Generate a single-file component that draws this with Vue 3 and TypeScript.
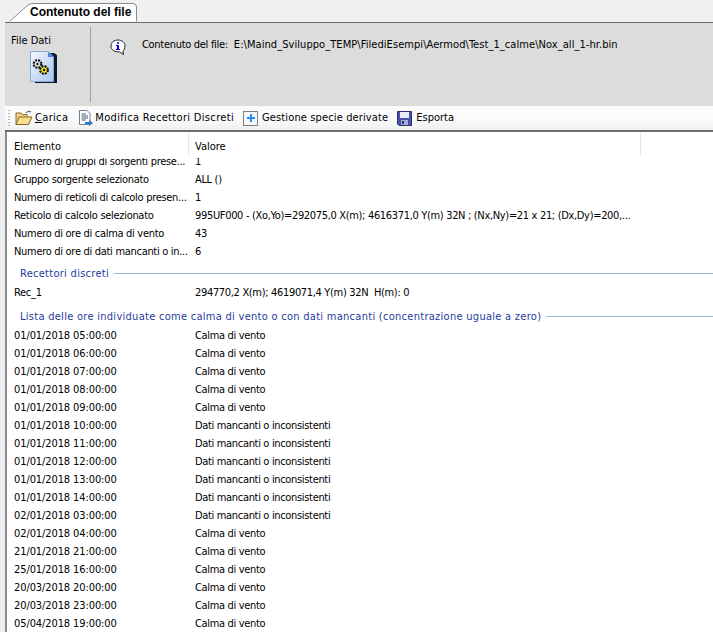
<script setup lang="ts">
interface Row { k: string; v: string }
const top: Row[] = [
  { k: 'Gruppo sorgente selezionato', v: 'ALL ()' },
  { k: 'Numero di reticoli di calcolo presen...', v: '1' },
  { k: 'Reticolo di calcolo selezionato', v: '995UF000 - (Xo,Yo)=292075,0 X(m); 4616371,0 Y(m) 32N ; (Nx,Ny)=21 x 21; (Dx,Dy)=200,...' },
  { k: 'Numero di ore di calma di vento', v: '43' },
  { k: 'Numero di ore di dati mancanti o in...', v: '6' },
]
const C = 'Calma di vento'
const D = 'Dati mancanti o inconsistenti'
const hours: Row[] = [
  ['01/01/2018 05:00:00', C], ['01/01/2018 06:00:00', C], ['01/01/2018 07:00:00', C],
  ['01/01/2018 08:00:00', C], ['01/01/2018 09:00:00', C], ['01/01/2018 10:00:00', D],
  ['01/01/2018 11:00:00', D], ['01/01/2018 12:00:00', D], ['01/01/2018 13:00:00', D],
  ['01/01/2018 14:00:00', D], ['02/01/2018 03:00:00', D], ['02/01/2018 04:00:00', C],
  ['21/01/2018 21:00:00', C], ['25/01/2018 16:00:00', C], ['20/03/2018 20:00:00', C],
  ['20/03/2018 23:00:00', C], ['05/04/2018 19:00:00', C],
].map(([k, v]) => ({ k, v }))
</script>

<template>
  <div class="app">
    <div class="tabstrip">
      <div class="tab">
        <svg class="tabshape" width="128" height="20" viewBox="0 0 128 20">
          <path d="M0.5 19.5 L19 3 Q21 1.500 24 1.500 L124 1.500 Q127.500 1.500 127.500 5 L127.500 19.500" fill="#fff" stroke="#8a8a8a" />
        </svg>
        <span class="tabtext">Contenuto del file</span>
      </div>
    </div>
    <div class="body">
      <div class="info">
        <div class="filedati">
          <span class="fdlabel">File Dati</span>
          <svg class="docicon" width="28" height="33" viewBox="0 0 28 33">
            <defs>
              <linearGradient id="page" x1="0" y1="0" x2="1" y2="1">
                <stop offset="0" stop-color="#f4f8ff" />
                <stop offset="1" stop-color="#a9c6f2" />
              </linearGradient>
            </defs>
            <path d="M5 2 H24 L27 4 V32 H5 Z" fill="#10182c" />
            <path d="M0.5 0.5 H18 L23.5 6 V30.5 H0.5 Z" fill="url(#page)" stroke="#8aa8d8" />
            <path d="M18 0.5 L23.5 6 H18 Z" fill="#4f8ae0" />
            <circle cx="7.500" cy="13" r="3.800" fill="#e8e8e8" stroke="#111" stroke-width="2.200" stroke-dasharray="2 1" />
            <circle cx="7.500" cy="13" r="1.200" fill="#111" />
            <circle cx="14" cy="19" r="3.800" fill="#f8e71c" stroke="#111" stroke-width="2.200" stroke-dasharray="2 1" />
            <circle cx="14" cy="19" r="1.200" fill="#111" />
          </svg>
        </div>
        <div class="sep"></div>
        <svg class="infoicon" width="16" height="17" viewBox="0 0 16 17">
          <path d="M8 1 C12 1 15 3.500 15 7 C15 9.500 14 11 13 11.800 L13.500 15.500 L9.500 12.800 C4.500 13.300 1 11 1 7 C1 3.500 4 1 8 1 Z" fill="#fff" stroke="#222" />
          <circle cx="8" cy="4" r="1.100" fill="#0000e0" />
          <path d="M6 6 H9 V10 H10 V11 H6 V10 H7 V7 H6 Z" fill="#0000e0" />
        </svg>
        <span class="path"><span class="plabel">Contenuto del file:</span><span class="pval">E:\Maind_Sviluppo_TEMP\FilediEsempi\Aermod\Test_1_calme\Nox_all_1-hr.bin</span></span>
      </div>
      <div class="toolbar">
        <span class="grip"></span>
        <div class="tool t1">
          <svg width="18" height="16" viewBox="0 0 18 16">
            <path d="M1 14.500 V3 H6 L7.500 4.500 H12 V7" fill="#f0d48a" stroke="#8a6a20" />
            <path d="M1 14.500 L4 7 H17 L13.500 14.500 Z" fill="#f7dc8e" stroke="#8a6a20" />
            <path d="M11 3 Q13 0.500 16 2" fill="none" stroke="#5a6a80" stroke-width="1.200" />
          </svg>
          <span class="tl"><u>C</u>arica</span>
        </div>
        <div class="tool t2">
          <svg width="15" height="16" viewBox="0 0 15 16">
            <path d="M1.500 0.500 H9 L12 3.500 V14.500 H1.500 Z" fill="#fff" stroke="#6c7f9c" />
            <path d="M3.500 4 H8 M3.500 6 H10 M3.500 8 H10 M3.500 10 H8" stroke="#4a5a78" />
            <path d="M7 12 H11 V10 L15 13 L11 16 V14 H7 Z" fill="#2f78c8" />
          </svg>
          <span class="tl">Modifica Recettori Discreti</span>
        </div>
        <div class="tool t3">
          <span class="plusbox"><svg width="8" height="8" viewBox="0 0 8 8"><path d="M3 0 H5 V3 H8 V5 H5 V8 H3 V5 H0 V3 H3 Z" fill="#1e90ff" /></svg></span>
          <span class="tl">Gestione specie derivate</span>
        </div>
        <div class="tool t4">
          <svg width="15" height="15" viewBox="0 0 15 15">
            <path d="M0.500 0.500 H14.500 V14.500 H2 L0.500 13 Z" fill="#4a52a8" stroke="#2a2f78" />
            <rect x="3" y="1" width="9" height="6" fill="#e8ecf8" />
            <rect x="4" y="9" width="7" height="5" fill="#a8aed0" />
            <rect x="5" y="10" width="2" height="3" fill="#2a2f78" />
          </svg>
          <span class="tl">Esporta</span>
        </div>
      </div>
      <div class="list">
        <div class="lhead">
          <span class="hcell h1">Elemento</span>
          <span class="hcell h2">Valore</span>
        </div>
        <div class="row clipped"><span class="k">Numero di gruppi di sorgenti prese...</span><span class="v">1</span></div>
        <div v-for="r in top" :key="r.k" class="row"><span class="k">{{ r.k }}</span><span class="v">{{ r.v }}</span></div>
        <div class="group g1"><span>Recettori discreti</span><i></i></div>
        <div class="row rec"><span class="k">Rec_1</span><span class="v">294770,2 X(m); 4619071,4 Y(m) 32N&nbsp; H(m): 0</span></div>
        <div class="group g2"><span>Lista delle ore individuate come calma di vento o con dati mancanti (concentrazione uguale a zero)</span><i></i></div>
        <div v-for="r in hours" :key="r.k" class="row"><span class="k date">{{ r.k }}</span><span class="v">{{ r.v }}</span></div>
      </div>
    </div>
  </div>
</template>

<style scoped>
.app {
  width: 713px;
  height: 632px;
  overflow: hidden;
  background: #f0f0f0;
  font-family: "DejaVu Sans Condensed", "DejaVu Sans", sans-serif;
  font-stretch: condensed;
  font-size: 11px;
  color: #000;
}
.tabstrip {
  height: 22px;
  padding-left: 9px;
  display: flex;
  box-sizing: border-box;
}
.tab {
  position: relative;
  width: 128px;
  height: 23px;
}
.tabshape {
  position: absolute;
  left: 0;
  top: 2px;
}
.tabtext {
  position: absolute;
  left: 21px;
  top: 5px;
  font-family: "Liberation Sans", sans-serif;
  font-stretch: normal;
  font-size: 12px;
  font-weight: 700;
  line-height: 15px;
  white-space: nowrap;
}
.body {
  border-top: 1px solid #6e6e6e;
  margin-left: 5px;
}
.info {
  height: 83px;
  background: #dcdcdc;
  display: flex;
  align-items: flex-start;
}
.filedati {
  width: 85px;
  padding: 11px 0 0 6px;
  box-sizing: border-box;
  display: flex;
  flex-direction: column;
}
.fdlabel {
  line-height: 14px;
}
.docicon {
  margin: 3px 0 0 19px;
}
.sep {
  width: 1px;
  height: 75px;
  margin-top: 4px;
  background: #a0a0a0;
}
.infoicon {
  margin: 16px 0 0 19px;
}
.path {
  margin: 15px 0 0 16px;
  line-height: 14px;
  white-space: nowrap;
  display: flex;
  gap: 6px;
}
.plabel {
  letter-spacing: -0.3px;
}
.pval {
  letter-spacing: 0.065px;
}
.toolbar {
  height: 26px;
  display: flex;
  align-items: center;
  background: linear-gradient(#fbfbfb, #fbfbfb 50%, #f0f0f0);
  box-sizing: border-box;
  border-bottom: 2px solid #6e6e6e;
  padding-left: 3px;
}
.grip {
  width: 2px;
  height: 17px;
  margin-right: 5px;
  background-image: linear-gradient(#b4b4b4 50%, transparent 50%);
  background-size: 2px 3px;
}
.tool {
  display: flex;
  align-items: center;
  gap: 2px;
  margin-right: 9px;
  line-height: 16px;
  white-space: nowrap;
}
.t1 { margin-right: 10px; }
.t1 .tl { letter-spacing: 0.33px; }
.t2 .tl { letter-spacing: 0.33px; }
.t3 .tl { letter-spacing: 0.13px; }
.t4 { gap: 4px; }
.plusbox {
  width: 15px;
  height: 15px;
  box-sizing: border-box;
  border: 1px solid #7f7f7f;
  display: flex;
  align-items: center;
  justify-content: center;
  margin-right: 2px;
  background: #f8f8f8;
}
.list {
  border-left: 2px solid #8c8c8c;
  background: #fff;
  height: 500px;
  padding-left: 1px;
  overflow: hidden;
}
.lhead {
  height: 26px;
  display: flex;
  box-sizing: border-box;
}
.hcell {
  line-height: 30px;
  height: 24px;
  border-right: 1px solid #e5e5e5;
  box-sizing: border-box;
  padding-left: 6px;
}
.h1 { width: 181px; }
.h2 { width: 452px; }
.row {
  height: 18px;
  display: flex;
  line-height: 18px;
  white-space: nowrap;
}
.row.clipped {
  height: 13px;
  align-items: flex-end;
  overflow: hidden;
}
.k {
  width: 187px;
  padding-left: 6px;
  box-sizing: border-box;
  flex: none;
  letter-spacing: -0.3px;
}
.k.date {
  letter-spacing: -0.1px;
}
.v {
  flex: none;
  letter-spacing: -0.33px;
}
.clipped .k, .clipped .v {
  height: 18px;
}
.group {
  display: flex;
  align-items: center;
  height: 14px;
  color: #1f3c9e;
  padding-left: 12px;
  gap: 5px;
  white-space: nowrap;
  letter-spacing: 0.28px;
}
.group i {
  flex: 1;
  height: 1px;
  background: #9db4e0;
}
.g1 { margin-top: 5px; }
.rec { margin-top: 4px; }
.g2 { margin-top: 7px; margin-bottom: 4px; }
</style>
